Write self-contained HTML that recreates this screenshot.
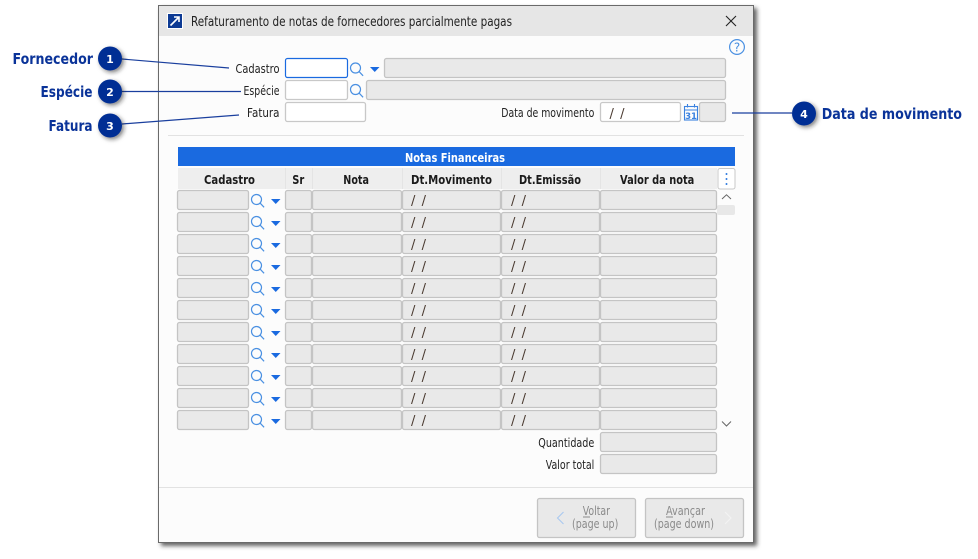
<!DOCTYPE html>
<html><head><meta charset="utf-8"><style>
html,body{margin:0;padding:0;background:#fff;width:978px;height:559px;overflow:hidden}
svg{display:block}
text{font-family:"DejaVu Sans","Liberation Sans",sans-serif;font-size:12px;fill:#222}
.b{font-weight:bold;font-size:12px;fill:#1b1b1b}
.c{font-weight:bold;font-size:15px;fill:#0a3399}
.n{font-weight:bold;font-size:12px;fill:#fff}
.d{font-size:13px;fill:#4a3a30}
.g{fill:#8a8a8a}
.f{fill:#e9e9e9;stroke:#c4c4c4;stroke-width:1.3}
.w{fill:#fff;stroke:#c8c8c8;stroke-width:1.3}
.m{fill:none;stroke:#4a90e2;stroke-width:1.2}
</style></head><body>
<svg width="978" height="559" viewBox="0 0 978 559" xmlns="http://www.w3.org/2000/svg">
<defs>
<filter id="s" x="-5%" y="-5%" width="112%" height="112%"><feDropShadow dx="3" dy="3" stdDeviation="2.2" flood-color="#333" flood-opacity=".75"/></filter>
<filter id="cs" x="-40%" y="-40%" width="190%" height="190%"><feDropShadow dx="2" dy="2" stdDeviation="2" flood-color="#222" flood-opacity=".55"/></filter>
<g id="mag"><circle cx="0" cy="0" r="5" class="m"/><path d="M3.7 3.7L7.6 7.8" class="m"/></g>
<path id="arr" d="M0 0H9.5L4.75 5Z" fill="#1a6ae0"/>
<g id="row">
<rect x="177.5" y="190.5" width="71" height="19" rx="2" class="f"/>
<use href="#mag" x="256.5" y="199.5"/>
<use href="#arr" x="271" y="199"/>
<rect x="285.5" y="190.5" width="26" height="19" rx="2" class="f"/>
<rect x="312.5" y="190.5" width="89" height="19" rx="2" class="f"/>
<rect x="402.5" y="190.5" width="98" height="19" rx="2" class="f"/>
<rect x="501.5" y="190.5" width="98" height="19" rx="2" class="f"/>
<rect x="600.5" y="190.5" width="116" height="19" rx="2" class="f"/>
</g>
</defs>

<!-- window -->
<rect x="158.5" y="5.5" width="595" height="537" fill="#fcfcfc" stroke="#6a6a6a" filter="url(#s)"/>
<rect x="159" y="6" width="594" height="30" fill="#e6e6e6"/>
<rect x="167.5" y="13.5" width="15" height="15" fill="#0d3a94" stroke="#fff"/>
<path d="M170.5 25.5L178.5 17.5M174 17H179V22" stroke="#fff" stroke-width="1.6" fill="none"/>
<text x="191" y="26" textLength="321" lengthAdjust="spacingAndGlyphs" style="font-size:13px">Refaturamento de notas de fornecedores parcialmente pagas</text>
<path d="M726 16L736 26M736 16L726 26" stroke="#222" stroke-width="1.1"/>
<circle cx="737" cy="47" r="7.4" fill="none" stroke="#4a90e2" stroke-width="1.2"/>
<text x="737" y="51.5" text-anchor="middle" style="font-size:12px;fill:#4a90e2">?</text>

<!-- form -->
<text x="235.5" y="73" textLength="44" lengthAdjust="spacingAndGlyphs">Cadastro</text>
<text x="243.5" y="95" textLength="36" lengthAdjust="spacingAndGlyphs">Espécie</text>
<text x="247" y="117" textLength="32.5" lengthAdjust="spacingAndGlyphs">Fatura</text>
<text x="501.3" y="117" textLength="93" lengthAdjust="spacingAndGlyphs">Data de movimento</text>
<rect x="285.5" y="58.5" width="62" height="19" rx="2" fill="#fff" stroke="#1a6ae0" stroke-width="1.2"/>
<use href="#mag" x="355.5" y="68"/>
<use href="#arr" x="370" y="67"/>
<rect x="384.5" y="58.5" width="341" height="19" rx="2" class="f"/>
<rect x="285.5" y="80.5" width="62" height="19" rx="2" class="w"/>
<use href="#mag" x="355.5" y="89.5"/>
<rect x="366.5" y="80.5" width="359" height="19" rx="2" class="f"/>
<rect x="285.5" y="102.5" width="80" height="19" rx="2" class="w"/>
<rect x="600.5" y="102.5" width="80" height="19" rx="2" class="w"/>
<text class="d" x="609.5" y="118" textLength="15">/ /</text>
<g fill="none" stroke="#3b82e0" stroke-width="1.1">
<rect x="684.5" y="106.5" width="13" height="13.5"/><path d="M684.5 110H697.5M687.5 104V107.5M694.5 104V107.5"/>
</g>
<text x="691" y="119" text-anchor="middle" style="font-size:8.5px;font-weight:bold;fill:#3b82e0">31</text>
<rect x="699.5" y="102.5" width="26" height="19" rx="2" class="f"/>
<path d="M168 135.5H744" stroke="#e2e2e2"/>

<!-- table -->
<rect x="178" y="147" width="557" height="19" fill="#1a6ae0"/>
<text class="n" x="405" y="162" textLength="100" lengthAdjust="spacingAndGlyphs">Notas Financeiras</text>
<rect x="178" y="168" width="539" height="21" fill="#eeeeee"/>
<path d="M285.5 168V189M312.5 168V189M402.5 168V189M501.5 168V189M600.5 168V189" stroke="#e4e4e4"/>
<text class="b" x="204" y="184" textLength="51" lengthAdjust="spacingAndGlyphs">Cadastro</text>
<text class="b" x="292.3" y="184" textLength="12" lengthAdjust="spacingAndGlyphs">Sr</text>
<text class="b" x="343.3" y="184" textLength="25.7" lengthAdjust="spacingAndGlyphs">Nota</text>
<text class="b" x="411" y="184" textLength="81" lengthAdjust="spacingAndGlyphs">Dt.Movimento</text>
<text class="b" x="519" y="184" textLength="62" lengthAdjust="spacingAndGlyphs">Dt.Emissão</text>
<text class="b" x="620" y="184" textLength="74.3" lengthAdjust="spacingAndGlyphs">Valor da nota</text>
<rect x="718" y="168.5" width="17" height="20.5" rx="2" fill="#fff" stroke="#c8c8c8"/>
<path d="M726.5 173V175M726.5 178V180M726.5 183V185" stroke="#3b82e0" stroke-width="1.6"/>
<path d="M722 199L726.5 194.8L731 199" fill="none" stroke="#666"/>
<rect x="717" y="205" width="18" height="10" rx="2" fill="#e8e8e8"/>
<path d="M722 421.5L726.5 426L731 421.5" fill="none" stroke="#666"/>

<use href="#row" y="0"/><use href="#row" y="22"/><use href="#row" y="44"/><use href="#row" y="66"/><use href="#row" y="88"/><use href="#row" y="110"/><use href="#row" y="132"/><use href="#row" y="154"/><use href="#row" y="176"/><use href="#row" y="198"/><use href="#row" y="220"/>

<g>
<text class="d" x="411" y="205" textLength="15">/ /</text><text class="d" x="511" y="205" textLength="15">/ /</text>
<text class="d" x="411" y="227" textLength="15">/ /</text><text class="d" x="511" y="227" textLength="15">/ /</text>
<text class="d" x="411" y="249" textLength="15">/ /</text><text class="d" x="511" y="249" textLength="15">/ /</text>
<text class="d" x="411" y="271" textLength="15">/ /</text><text class="d" x="511" y="271" textLength="15">/ /</text>
<text class="d" x="411" y="293" textLength="15">/ /</text><text class="d" x="511" y="293" textLength="15">/ /</text>
<text class="d" x="411" y="315" textLength="15">/ /</text><text class="d" x="511" y="315" textLength="15">/ /</text>
<text class="d" x="411" y="337" textLength="15">/ /</text><text class="d" x="511" y="337" textLength="15">/ /</text>
<text class="d" x="411" y="359" textLength="15">/ /</text><text class="d" x="511" y="359" textLength="15">/ /</text>
<text class="d" x="411" y="381" textLength="15">/ /</text><text class="d" x="511" y="381" textLength="15">/ /</text>
<text class="d" x="411" y="403" textLength="15">/ /</text><text class="d" x="511" y="403" textLength="15">/ /</text>
<text class="d" x="411" y="425" textLength="15">/ /</text><text class="d" x="511" y="425" textLength="15">/ /</text>
</g>

<!-- totals -->
<text x="538.3" y="447" textLength="56" lengthAdjust="spacingAndGlyphs">Quantidade</text>
<text x="545.7" y="469" textLength="48.6" lengthAdjust="spacingAndGlyphs">Valor total</text>
<rect x="600.5" y="432.5" width="116" height="19" rx="2" class="f"/>
<rect x="600.5" y="454.5" width="116" height="19" rx="2" class="f"/>
<path d="M159 487.5H753" stroke="#e2e2e2"/>

<!-- buttons -->
<rect x="537.5" y="498.5" width="98" height="39" rx="2" class="f"/>
<rect x="645.5" y="498.5" width="98" height="39" rx="2" class="f"/>
<path d="M563.5 512L557.5 518L563.5 524" fill="none" stroke="#a9c8f0" stroke-width="1.1"/>
<path d="M725 512L731 518L725 524" fill="none" stroke="#f2f2f2" stroke-width="1.1"/>
<text class="g" x="582.7" y="515" textLength="27.3" lengthAdjust="spacingAndGlyphs">Voltar</text>
<path d="M583 517H590" stroke="#8a8a8a"/>
<text class="g" x="572" y="528" textLength="46.3" lengthAdjust="spacingAndGlyphs">(page up)</text>
<text class="g" x="666" y="515" textLength="39" lengthAdjust="spacingAndGlyphs">Avançar</text>
<path d="M666 517H673" stroke="#8a8a8a"/>
<text class="g" x="654" y="528" textLength="60" lengthAdjust="spacingAndGlyphs">(page down)</text>

<!-- callout lines -->
<g stroke="#1a3f9e" stroke-width="1.2" fill="none">
<path d="M122 59L229 68"/><path d="M122 91.5H241"/><path d="M122 124L239 115"/><path d="M732 113H792"/>
</g>

<!-- callouts -->
<g fill="#002f94" filter="url(#cs)">
<circle cx="110" cy="58.5" r="12"/><circle cx="110" cy="91.5" r="12"/><circle cx="110" cy="125.5" r="12"/><circle cx="804" cy="113.5" r="12"/>
</g>
<g text-anchor="middle">
<text x="110" y="63" style="fill:#fff;font-size:11px;font-weight:bold">1</text>
<text x="110" y="96" style="fill:#fff;font-size:11px;font-weight:bold">2</text>
<text x="110" y="130" style="fill:#fff;font-size:11px;font-weight:bold">3</text>
<text x="804" y="118" style="fill:#fff;font-size:11px;font-weight:bold">4</text>
</g>
<text class="c" x="12.5" y="64" textLength="80.5" lengthAdjust="spacingAndGlyphs">Fornecedor</text>
<text class="c" x="40.5" y="97" textLength="52" lengthAdjust="spacingAndGlyphs">Espécie</text>
<text class="c" x="48.5" y="131" textLength="44" lengthAdjust="spacingAndGlyphs">Fatura</text>
<text class="c" x="821.7" y="119" textLength="140.3" lengthAdjust="spacingAndGlyphs">Data de movimento</text>
</svg>
</body></html>
